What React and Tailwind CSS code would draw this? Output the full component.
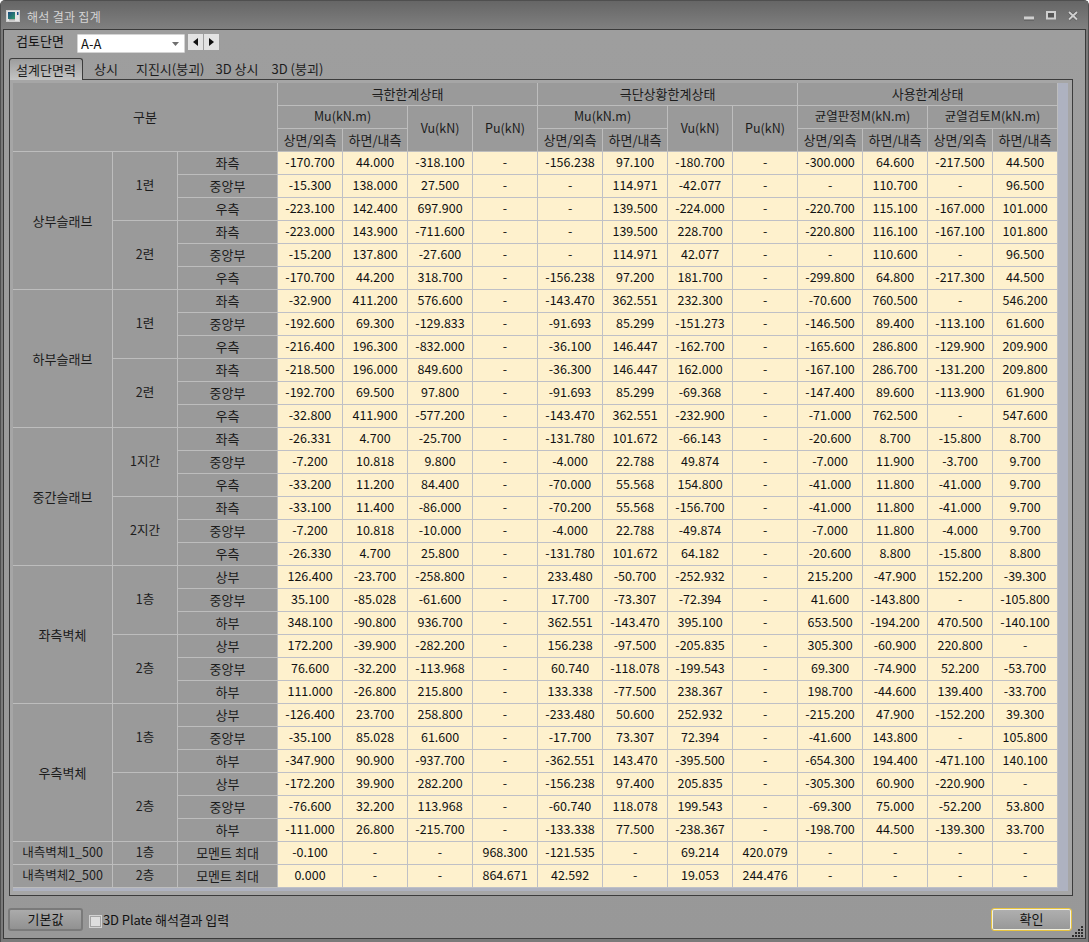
const FONT = "font-['Noto_Sans_CJK_KR','Noto_Sans',sans-serif]";

const groups = [
  { name: "상부슬래브", subs: [
    { name: "1련", pos: ["좌측", "중앙부", "우측"], rows: [
      "-170.700 44.000 -318.100 - -156.238 97.100 -180.700 - -300.000 64.600 -217.500 44.500",
      "-15.300 138.000 27.500 - - 114.971 -42.077 - - 110.700 - 96.500",
      "-223.100 142.400 697.900 - - 139.500 -224.000 - -220.700 115.100 -167.000 101.000",
    ]},
    { name: "2련", pos: ["좌측", "중앙부", "우측"], rows: [
      "-223.000 143.900 -711.600 - - 139.500 228.700 - -220.800 116.100 -167.100 101.800",
      "-15.200 137.800 -27.600 - - 114.971 42.077 - - 110.600 - 96.500",
      "-170.700 44.200 318.700 - -156.238 97.200 181.700 - -299.800 64.800 -217.300 44.500",
    ]},
  ]},
  { name: "하부슬래브", subs: [
    { name: "1련", pos: ["좌측", "중앙부", "우측"], rows: [
      "-32.900 411.200 576.600 - -143.470 362.551 232.300 - -70.600 760.500 - 546.200",
      "-192.600 69.300 -129.833 - -91.693 85.299 -151.273 - -146.500 89.400 -113.100 61.600",
      "-216.400 196.300 -832.000 - -36.100 146.447 -162.700 - -165.600 286.800 -129.900 209.900",
    ]},
    { name: "2련", pos: ["좌측", "중앙부", "우측"], rows: [
      "-218.500 196.000 849.600 - -36.300 146.447 162.000 - -167.100 286.700 -131.200 209.800",
      "-192.700 69.500 97.800 - -91.693 85.299 -69.368 - -147.400 89.600 -113.900 61.900",
      "-32.800 411.900 -577.200 - -143.470 362.551 -232.900 - -71.000 762.500 - 547.600",
    ]},
  ]},
  { name: "중간슬래브", subs: [
    { name: "1지간", pos: ["좌측", "중앙부", "우측"], rows: [
      "-26.331 4.700 -25.700 - -131.780 101.672 -66.143 - -20.600 8.700 -15.800 8.700",
      "-7.200 10.818 9.800 - -4.000 22.788 49.874 - -7.000 11.900 -3.700 9.700",
      "-33.200 11.200 84.400 - -70.000 55.568 154.800 - -41.000 11.800 -41.000 9.700",
    ]},
    { name: "2지간", pos: ["좌측", "중앙부", "우측"], rows: [
      "-33.100 11.400 -86.000 - -70.200 55.568 -156.700 - -41.000 11.800 -41.000 9.700",
      "-7.200 10.818 -10.000 - -4.000 22.788 -49.874 - -7.000 11.800 -4.000 9.700",
      "-26.330 4.700 25.800 - -131.780 101.672 64.182 - -20.600 8.800 -15.800 8.800",
    ]},
  ]},
  { name: "좌측벽체", subs: [
    { name: "1층", pos: ["상부", "중앙부", "하부"], rows: [
      "126.400 -23.700 -258.800 - 233.480 -50.700 -252.932 - 215.200 -47.900 152.200 -39.300",
      "35.100 -85.028 -61.600 - 17.700 -73.307 -72.394 - 41.600 -143.800 - -105.800",
      "348.100 -90.800 936.700 - 362.551 -143.470 395.100 - 653.500 -194.200 470.500 -140.100",
    ]},
    { name: "2층", pos: ["상부", "중앙부", "하부"], rows: [
      "172.200 -39.900 -282.200 - 156.238 -97.500 -205.835 - 305.300 -60.900 220.800 -",
      "76.600 -32.200 -113.968 - 60.740 -118.078 -199.543 - 69.300 -74.900 52.200 -53.700",
      "111.000 -26.800 215.800 - 133.338 -77.500 238.367 - 198.700 -44.600 139.400 -33.700",
    ]},
  ]},
  { name: "우측벽체", subs: [
    { name: "1층", pos: ["상부", "중앙부", "하부"], rows: [
      "-126.400 23.700 258.800 - -233.480 50.600 252.932 - -215.200 47.900 -152.200 39.300",
      "-35.100 85.028 61.600 - -17.700 73.307 72.394 - -41.600 143.800 - 105.800",
      "-347.900 90.900 -937.700 - -362.551 143.470 -395.500 - -654.300 194.400 -471.100 140.100",
    ]},
    { name: "2층", pos: ["상부", "중앙부", "하부"], rows: [
      "-172.200 39.900 282.200 - -156.238 97.400 205.835 - -305.300 60.900 -220.900 -",
      "-76.600 32.200 113.968 - -60.740 118.078 199.543 - -69.300 75.000 -52.200 53.800",
      "-111.000 26.800 -215.700 - -133.338 77.500 -238.367 - -198.700 44.500 -139.300 33.700",
    ]},
  ]},
];

const extra = [
  ["내측벽체1_500", "1층", "모멘트 최대", "-0.100 - - 968.300 -121.535 - 69.214 420.079 - - - -"],
  ["내측벽체2_500", "2층", "모멘트 최대", "0.000 - - 864.671 42.592 - 19.053 244.476 - - - -"],
];

const H = "bg-[#9a9a9a] border-r border-b border-[#bdbdbd] text-center align-middle p-0 pb-[1px] font-normal text-[#1c1c1c] leading-none";
const HK = `${H} text-[13px]`;
const D = "bg-[#fef1cd] border-r border-b border-[#bfc0c6] text-center align-middle p-0 pb-[1px] text-[#111111] leading-none";

function Values({ text }) {
  return text.split(" ").map((v, i) => <td key={i} className={D}>{v}</td>);
}

function Table() {
  const cols = [100, 65, 100, 65, 65, 65, 65, 65, 65, 65, 65, 65, 65, 65, 65];
  return (
    <table className="table-fixed w-[1045px] border-separate border-spacing-0 text-[12.5px]">
      <colgroup>
        {cols.map((w, i) => <col key={i} style={{ width: w }} />)}
      </colgroup>
      <thead>
        <tr className="h-[23px]">
          <th className={HK} colSpan={3} rowSpan={3}>구분</th>
          <th className={HK} colSpan={4}>극한한계상태</th>
          <th className={HK} colSpan={4}>극단상황한계상태</th>
          <th className={HK} colSpan={4}>사용한계상태</th>
        </tr>
        <tr className="h-[23px]">
          <th className={H} colSpan={2}>Mu(kN.m)</th>
          <th className={H} rowSpan={2}>Vu(kN)</th>
          <th className={H} rowSpan={2}>Pu(kN)</th>
          <th className={H} colSpan={2}>Mu(kN.m)</th>
          <th className={H} rowSpan={2}>Vu(kN)</th>
          <th className={H} rowSpan={2}>Pu(kN)</th>
          <th className={H} colSpan={2}>균열판정M(kN.m)</th>
          <th className={H} colSpan={2}>균열검토M(kN.m)</th>
        </tr>
        <tr className="h-[23px]">
          {["상면/외측", "하면/내측", "상면/외측", "하면/내측", "상면/외측", "하면/내측", "상면/외측", "하면/내측"].map((t, i) => (
            <th key={i} className={HK}>{t}</th>
          ))}
        </tr>
      </thead>
      <tbody>
        {groups.map((g) =>
          g.subs.map((s, si) =>
            s.rows.map((r, ri) => (
              <tr key={g.name + si + ri} className="h-[23px]">
                {si === 0 && ri === 0 && <td className={HK} rowSpan={6}>{g.name}</td>}
                {ri === 0 && <td className={H} rowSpan={3}>{s.name}</td>}
                <td className={HK}>{s.pos[ri]}</td>
                <Values text={r} />
              </tr>
            ))
          )
        )}
        {extra.map((e) => (
          <tr key={e[0]} className="h-[23px]">
            <td className={H}>{e[0]}</td>
            <td className={H}>{e[1]}</td>
            <td className={HK}>{e[2]}</td>
            <Values text={e[3]} />
          </tr>
        ))}
      </tbody>
    </table>
  );
}

function AppIcon() {
  return (
    <svg width="14" height="12" viewBox="0 0 14 12" className="shrink-0 mt-[2px]">
      <defs>
        <linearGradient id="ai" x1="0" y1="0" x2="1" y2="1">
          <stop offset="0" stopColor="#1c4a80" />
          <stop offset="1" stopColor="#2f9a6a" />
        </linearGradient>
      </defs>
      <rect x="0.5" y="0.5" width="13" height="11" fill="#e4e4e4" stroke="#cfcfcf" />
      <rect x="2" y="2" width="7" height="7" fill="url(#ai)" />
      <rect x="11" y="2" width="1.5" height="3" fill="#1d4f8a" />
      <rect x="3" y="9" width="6" height="1.5" fill="#a9a9a9" />
    </svg>
  );
}

function WinControls() {
  const dark = "#555555";
  const light = "#cfcfcf";
  return (
    <div className="flex items-center gap-[12px] mr-[10px] pt-[2px]">
      <svg width="10" height="10" viewBox="0 0 10 10">
        <rect x="0" y="5.5" width="10" height="3.5" fill={light} />
        <rect x="0" y="8.5" width="10" height="1" fill={dark} />
      </svg>
      <svg width="10" height="10" viewBox="0 0 10 10">
        <rect x="1" y="1" width="8" height="6.5" fill={dark} stroke={light} strokeWidth="2" />
      </svg>
      <svg width="10" height="10" viewBox="0 0 10 10">
        <path d="M1 1 L9 8.5 M9 1 L1 8.5" stroke={dark} strokeWidth="3.2" />
        <path d="M1 1 L9 8.5 M9 1 L1 8.5" stroke={light} strokeWidth="2" />
      </svg>
    </div>
  );
}

function Grip() {
  return (
    <svg width="12" height="12" viewBox="0 0 12 12" className="absolute right-[1px] bottom-[1px]">
      {[[9, 1], [6, 4], [9, 4], [3, 7], [6, 7], [9, 7], [0, 10], [3, 10], [6, 10], [9, 10]].map(([x, y], i) => (
        <rect key={i} x={x} y={y} width="2" height="2" fill="#2e2e2e" />
      ))}
    </svg>
  );
}

export default function App() {
  return (
    <div className={`${FONT} w-[1089px] h-[942px] flex flex-col bg-[#7a7a7a] rounded-t-[5px] border-t border-x border-[#4f4f4f] text-[#111111] overflow-hidden`}>
      <div className="h-[28px] shrink-0 flex items-center justify-between bg-gradient-to-b from-[#666666] to-[#808080] pl-[5px]">
        <div className="flex items-center gap-[7px]">
          <AppIcon />
          <span className="text-[12px] leading-none mt-[3px] text-[#d4d4d4] tracking-[0.3px]">해석 결과 집계</span>
        </div>
        <WinControls />
      </div>
      <div className="relative flex-1 flex flex-col mx-[2px] mb-[3px] border border-[#3a3a3a] bg-gradient-to-b from-[#9e9e9e] to-[#989898] px-[5px]">
        <div className="h-[28px] shrink-0 flex items-start pt-[4px]">
          <span className="text-[13px] leading-none ml-[7px] w-[61px]">검토단면</span>
          <div className="w-[108px] h-[19px] bg-white border border-[#d4d4d4] rounded-[1px] flex items-center justify-between pl-[3px] pr-[5px]">
            <span className="text-[13px] leading-none">A-A</span>
            <svg width="7" height="4" viewBox="0 0 7 4"><path d="M0 0H7L3.5 4Z" fill="#6f6f6f" /></svg>
          </div>
          <div className="ml-[3px] flex gap-[1px]">
            <div className="w-[15px] h-[16px] bg-[#e3e3e3] flex items-center justify-center">
              <svg width="5" height="8" viewBox="0 0 5 8"><path d="M5 0V8L0 4Z" fill="#111" /></svg>
            </div>
            <div className="w-[15px] h-[16px] bg-[#e3e3e3] flex items-center justify-center">
              <svg width="5" height="8" viewBox="0 0 5 8"><path d="M0 0V8L5 4Z" fill="#111" /></svg>
            </div>
          </div>
        </div>
        <div className="h-[21px] shrink-0 flex items-end text-[13px] text-[#1c1c1c]">
          <div className="h-[22px] w-[74px] -mb-[1px] z-10 rounded-t-[3px] border-x border-t border-[#3c3c3c] bg-gradient-to-b from-[#9d9d9d] to-[#c4c4c4] flex items-center justify-center">설계단면력</div>
          <div className="h-[21px] flex items-center ml-[11px]">상시</div>
          <div className="h-[21px] flex items-center ml-[18px]">지진시(붕괴)</div>
          <div className="h-[21px] flex items-center ml-[11px]">3D 상시</div>
          <div className="h-[21px] flex items-center ml-[13px]">3D (붕괴)</div>
        </div>
        <div className="h-[817px] w-[1064px] shrink-0 border border-[#3c3c3c] bg-[#a6a6a6] pt-[3px] pl-[3px]">
          <div className="w-[1055px] h-[808px] flex items-start bg-[#aeb2c0]">
            <Table />
          </div>
        </div>
        <div className="flex-1 flex items-start justify-between pt-[12px] pr-[8px] -ml-[1px] text-[13px]">
          <div className="flex items-center">
            <div className="w-[75px] h-[23px] pb-[2px] rounded-[3px] border-2 border-[#7a7a7a] bg-gradient-to-b from-[#ababab] to-[#919191] flex items-center justify-center">기본값</div>
            <div className="ml-[6px] mt-[3px] w-[13px] h-[13px] bg-[#dedede] border border-[#d2d2d2] shadow-[inset_0_0_0_1px_#a4a4a4]" />
            <span className="ml-[1px] mt-[1px] tracking-[-0.1px]">3D Plate 해석결과 입력</span>
          </div>
          <div className="w-[81px] h-[23px] pb-[2px] rounded-[3px] border border-[#e8c440] shadow-[inset_0_0_0_1px_#f2f0e0] bg-gradient-to-b from-[#b0b0b0] to-[#979797] flex items-center justify-center">확인</div>
        </div>
        <Grip />
      </div>
    </div>
  );
}
